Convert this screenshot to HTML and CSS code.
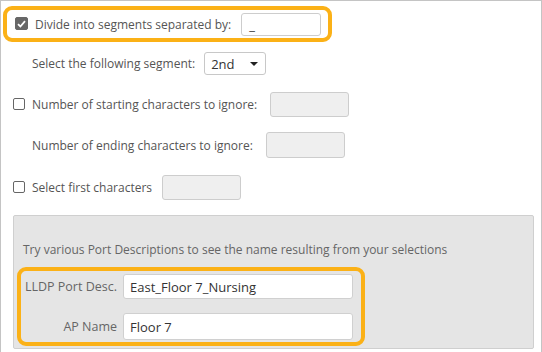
FILE: index.html
```html
<!DOCTYPE html>
<html lang="en">
<head>
    <meta charset="UTF-8">
    <title>Port Description Naming</title>
    <link rel="stylesheet" href="styles.css">
</head>
<body>
    <div class="frame">
        <div class="row row-divide highlight">
            <span class="check checked">
                <svg width="9" height="8" viewBox="0 0 9 8"><path d="M1 4.2 L3.4 6.5 L8 1.2" fill="none" stroke="#fff" stroke-width="1.8"/></svg>
            </span>
            <span class="label">Divide into segments separated by:</span>
            <span class="field white sep">_</span>
        </div>

        <div class="row row-select">
            <span class="label">Select the following segment:</span>
            <span class="select">2nd <span class="caret"></span></span>
        </div>

        <div class="row row-start">
            <span class="check"></span>
            <span class="label">Number of starting characters to ignore:</span>
            <span class="field start"></span>
        </div>

        <div class="row row-end">
            <span class="label">Number of ending characters to ignore:</span>
            <span class="field end"></span>
        </div>

        <div class="row row-first">
            <span class="check"></span>
            <span class="label">Select first characters</span>
            <span class="field first"></span>
        </div>

        <div class="panel">
            <div class="panel-note">Try various Port Descriptions to see the name resulting from your selections</div>
            <div class="try-box">
                <div class="try-row">
                    <span class="try-label">LLDP Port Desc.</span>
                    <span class="try-input">East_Floor 7_Nursing</span>
                </div>
                <div class="try-row second">
                    <span class="try-label">AP Name</span>
                    <span class="try-input tall">Floor 7</span>
                </div>
            </div>
        </div>
    </div>
</body>
</html>
```
FILE: styles.css
```css
body {
    margin: 0;
    font-family: "Open Sans", "Liberation Sans", sans-serif;
    color: #555;
    background: white;
}
.frame {
    width: 542px;
    height: 352px;
    box-sizing: border-box;
    border: 1px solid #c4c4c4;
    border-bottom: none;
    overflow: hidden;
}
.row {
    display: flex;
    align-items: center;
    font-size: 12px;
    box-sizing: border-box;
    white-space: nowrap;
}
.highlight {
    border: 4px solid #fbb117;
    border-radius: 9px;
}
.row-divide {
    margin: 5px 0 0 2px;
    width: 329px;
    height: 36px;
    padding-left: 8px;
}
.row-select {
    margin-top: 8px;
    height: 27px;
    padding-left: 31px;
}
.row-start {
    margin-top: 14px;
    height: 27px;
    padding-left: 12px;
}
.row-end {
    margin-top: 13px;
    height: 28px;
    padding-left: 31px;
}
.row-first {
    margin-top: 15px;
    height: 27px;
    padding-left: 12px;
}
.check {
    width: 10px;
    height: 10px;
    border: 1px solid #666;
    border-radius: 2px;
    background: white;
    margin-right: 7px;
    margin-top: -2px;
    display: flex;
    align-items: center;
    justify-content: center;
}
.check.checked {
    background: #676767;
    border-color: #676767;
    width: 11px;
    height: 11px;
    margin-top: -1px;
}
.field {
    box-sizing: border-box;
    width: 79px;
    height: 25px;
    border: 1px solid #cdcdcd;
    border-radius: 3px;
    background: #efefef;
}
.field.white {
    background: white;
    width: 80px;
    height: 23px;
    color: #333;
    font-size: 13px;
    padding: 2px 0 0 7px;
}
.sep { margin-left: 10px; }
.start { margin-left: 13px; }
.end { margin-left: 13px; height: 26px; }
.first { margin-left: 10px; }
.select {
    box-sizing: border-box;
    margin-left: 9px;
    width: 62px;
    height: 23px;
    border: 1px solid #c8c8c8;
    border-radius: 3px;
    background: white;
    color: #333;
    font-size: 13px;
    display: flex;
    align-items: center;
    padding-left: 6px;
    position: relative;
}
.caret {
    position: absolute;
    right: 7px;
    top: 9px;
    border-left: 4px solid transparent;
    border-right: 4px solid transparent;
    border-top: 4px solid #222;
}
.panel {
    margin: 14px 0 0 12px;
    width: 521px;
    height: 134px;
    box-sizing: border-box;
    background: #e5e5e5;
    border: 1px solid #cfcfcf;
    border-radius: 2px;
    padding: 25px 0 0 3px;
}
.panel-note {
    font-size: 12px;
    color: #666;
    padding-left: 6px;
    height: 26px;
    white-space: nowrap;
}
.try-box {
    box-sizing: border-box;
    width: 348px;
    height: 79px;
    border: 4px solid #fbb117;
    border-radius: 9px;
    padding: 3px 8px 0 3px;
}
.try-row {
    display: flex;
    align-items: center;
}
.try-row.second {
    margin-top: 14px;
}
.try-label {
    width: 93px;
    text-align: right;
    font-size: 12.5px;
    color: #666;
    margin-right: 6px;
    white-space: nowrap;
}
.try-input {
    box-sizing: border-box;
    width: 230px;
    height: 25px;
    background: white;
    border: 1px solid #d0d0d0;
    border-radius: 3px;
    color: #333;
    font-size: 13px;
    display: flex;
    align-items: center;
    padding-left: 6px;
}
.try-input.tall {
    height: 27px;
}
```
